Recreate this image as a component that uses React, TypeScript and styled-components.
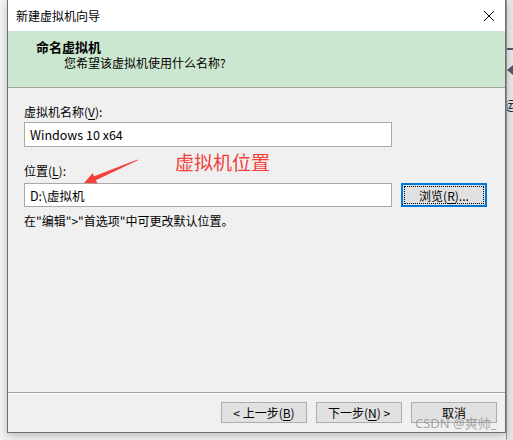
import React from "react";
import styled, { createGlobalStyle } from "styled-components";

const Global = createGlobalStyle`
  html, body { margin: 0; padding: 0; }
  body {
    background: #f2f2f2;
    font-family: "Noto Sans CJK SC", "Noto Sans", sans-serif;
    font-size: 12px;
    color: #000;
  }
`;

const Page = styled.div`
  position: relative;
  width: 513px;
  height: 440px;
  display: flex;
  overflow: hidden;
  background: #f3f3f3;
`;

const Window = styled.div`
  margin-left: 7px;
  width: 499px;
  height: 433px;
  box-sizing: border-box;
  display: flex;
  flex-direction: column;
  background: #f0f0f0;
  border-left: 1px solid #6f6f6f;
  border-right: 1px solid #6f6f6f;
  border-bottom: 1px solid #6f6f6f;
  box-shadow: 0 3px 8px rgba(0, 0, 0, 0.22);
  position: relative;
  z-index: 1;
`;

const TitleBar = styled.div`
  height: 31px;
  flex: none;
  background: #fff;
  display: flex;
  align-items: center;
  justify-content: space-between;
  padding: 0 9px 0 8px;
  font-size: 12px;
`;

const CloseBtn = styled.div`
  width: 12px;
  height: 12px;
  display: flex;
  margin-right: 1px;
`;

const Header = styled.div`
  flex: none;
  height: 57px;
  box-sizing: border-box;
  background: #cce7cf;
  border-bottom: 1px solid #a0a0a0;
  padding: 8px 0 0 28px;
  display: flex;
  flex-direction: column;
`;

const HeadTitle = styled.div`
  font-size: 13px;
  font-weight: 700;
  line-height: 16px;
`;

const HeadSub = styled.div`
  font-size: 12px;
  line-height: 16px;
  padding-left: 28px;
`;

const Body = styled.div`
  flex: 1;
  padding: 16px 0 0 16px;
  display: flex;
  flex-direction: column;
`;

const Label = styled.div<{ $top: number }>`
  line-height: 16px;
  margin-top: ${(p) => p.$top}px;
`;

const Row = styled.div<{ $top: number }>`
  display: flex;
  gap: 9px;
  margin-top: ${(p) => p.$top}px;
`;

const TextBox = styled.div<{ $h: number }>`
  width: 368px;
  height: ${(p) => p.$h}px;
  box-sizing: border-box;
  background: #fff;
  border: 1px solid #a9a9a9;
  display: flex;
  align-items: center;
  padding-left: 5px;
  font-size: 12.5px;
`;

const Button = styled.div<{ $focused?: boolean }>`
  width: 86px;
  height: ${(p) => (p.$focused ? 24 : 21)}px;
  box-sizing: border-box;
  background: #e1e1e1;
  border: ${(p) => (p.$focused ? "2px solid #0078d7" : "1px solid #adadad")};
  display: flex;
  align-items: center;
  justify-content: center;
  font-size: 12px;
  position: relative;
  &::after {
    content: "";
    display: ${(p) => (p.$focused ? "block" : "none")};
    position: absolute;
    inset: 1px;
    border: 1px dotted #000;
  }
`;

const Key = styled.span`
  text-decoration: underline;
  text-underline-offset: 2px;
`;

const Footer = styled.div`
  flex: none;
  height: 40px;
  box-sizing: border-box;
  border-top: 1px solid #a0a0a0;
  box-shadow: inset 0 1px 0 #fff;
  padding: 9px 8px 0 0;
  display: flex;
  justify-content: flex-end;
  gap: 9px;
`;

const BackApp = styled.div`
  flex: 1;
  background: #e6e6e6;
  border-left: 1px solid #9a9a9a;
  display: flex;
  flex-direction: column;
  overflow: hidden;
`;

const Dash = styled.div`
  margin-top: 48px;
  height: 2px;
  background: #4e5c69;
`;

const Chevron = styled.div`
  margin-top: 15px;
  width: 0;
  height: 0;
  border-top: 5px solid transparent;
  border-bottom: 5px solid transparent;
  border-right: 6px solid #4e5c69;
`;

const BackGlyph = styled.div`
  margin-top: 22px;
  margin-left: -3px;
  font-size: 13px;
  color: #2a2a50;
  line-height: 16px;
`;

const Note = styled.div`
  position: absolute;
  left: 175px;
  top: 149px;
  font-size: 19px;
  line-height: 26px;
  color: #f2403d;
  z-index: 2;
`;

const ArrowSvg = styled.svg`
  position: absolute;
  left: 0;
  top: 0;
  width: 513px;
  height: 440px;
  pointer-events: none;
  z-index: 2;
`;

const Watermark = styled.div`
  position: absolute;
  left: 415px;
  top: 414px;
  font-size: 13px;
  line-height: 18px;
  color: rgba(150, 150, 150, 0.85);
  z-index: 2;
  font-family: "Noto Sans", "Noto Sans CJK SC", sans-serif;
`;

export default function App() {
  return (
    <>
      <Global />
      <Page>
        <Window>
          <TitleBar>
            <span>新建虚拟机向导</span>
            <CloseBtn>
              <svg width="12" height="12" viewBox="0 0 12 12">
                <path d="M1 1 L11 11 M11 1 L1 11" stroke="#000" strokeWidth="1" />
              </svg>
            </CloseBtn>
          </TitleBar>
          <Header>
            <HeadTitle>命名虚拟机</HeadTitle>
            <HeadSub>您希望该虚拟机使用什么名称?</HeadSub>
          </Header>
          <Body>
            <Label $top={0}>
              虚拟机名称(<Key>V</Key>):
            </Label>
            <Row $top={2}>
              <TextBox $h={25}>Windows 10 x64</TextBox>
            </Row>
            <Label $top={16}>
              位置(<Key>L</Key>):
            </Label>
            <Row $top={4}>
              <TextBox $h={24}>D:\虚拟机</TextBox>
              <Button $focused>
                浏览(<Key>R</Key>)...
              </Button>
            </Row>
            <Label $top={6}>在"编辑"&gt;"首选项"中可更改默认位置。</Label>
          </Body>
          <Footer>
            <Button>
              &lt; 上一步(<Key>B</Key>)
            </Button>
            <Button>
              下一步(<Key>N</Key>) &gt;
            </Button>
            <Button>取消</Button>
          </Footer>
        </Window>
        <BackApp>
          <Dash />
          <Chevron />
          <BackGlyph>运</BackGlyph>
        </BackApp>
        <Note>虚拟机位置</Note>
        <ArrowSvg viewBox="0 0 513 440">
          <polygon
            points="137.5,159.5 94.2,176.2 92.6,173.2 84,183 97.4,183.2 95.8,180.2 137.8,160.3"
            fill="#f2403d"
          />
        </ArrowSvg>
        <Watermark>CSDN @爽帅_</Watermark>
      </Page>
    </>
  );
}
